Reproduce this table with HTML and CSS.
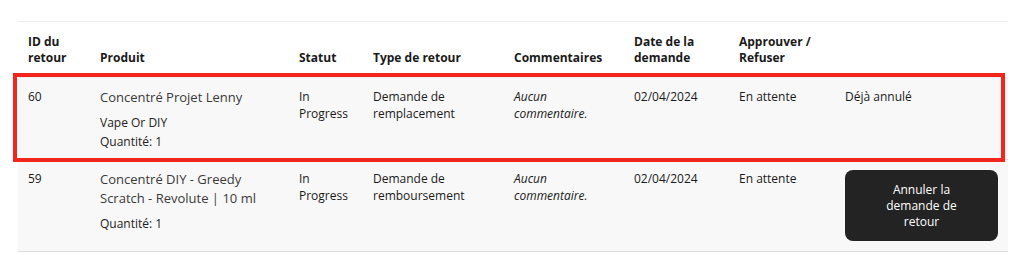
FILE: index.html
```html
<!DOCTYPE html>
<html lang="fr">
<head>
<meta charset="utf-8">
<link rel="stylesheet" href="styles.css">
</head>
<body>
<div class="wrap">
  <table class="returns">
    <colgroup>
      <col class="c-id"><col class="c-prod"><col class="c-stat"><col class="c-type"><col class="c-com"><col class="c-date"><col class="c-appr"><col class="c-act">
    </colgroup>
    <thead>
      <tr>
        <th>ID du retour</th>
        <th>Produit</th>
        <th>Statut</th>
        <th>Type de retour</th>
        <th>Commentaires</th>
        <th>Date de la demande</th>
        <th>Approuver / Refuser</th>
        <th></th>
      </tr>
    </thead>
    <tbody>
      <tr class="first">
        <td>60</td>
        <td class="prod">
          <div class="pname">Concentré Projet Lenny</div>
          <div class="pmeta">Vape Or DIY<br>Quantité: 1</div>
        </td>
        <td>In Progress</td>
        <td>Demande de remplacement</td>
        <td><em>Aucun commentaire.</em></td>
        <td>02/04/2024</td>
        <td>En attente</td>
        <td>Déjà annulé</td>
      </tr>
      <tr>
        <td>59</td>
        <td class="prod">
          <div class="pname">Concentré DIY - Greedy Scratch - Revolute | 10 ml</div>
          <div class="pmeta">Quantité: 1</div>
        </td>
        <td>In Progress</td>
        <td>Demande de remboursement</td>
        <td><em>Aucun commentaire.</em></td>
        <td>02/04/2024</td>
        <td>En attente</td>
        <td><button class="cancel" type="button">Annuler la demande de retour</button></td>
      </tr>
    </tbody>
  </table>
  <div class="highlight"></div>
</div>
</body>
</html>
```

FILE: styles.css
```css
html, body {
  margin: 0;
  padding: 0;
  background: #fff;
}
body {
  font-family: "Open Sans", "Liberation Sans", sans-serif;
  color: #1a1a1a;
  font-size: 12px;
}
.wrap {
  position: relative;
  padding: 21px 25px 0 18px;
}
.returns {
  width: 990px;
  border-collapse: collapse;
  table-layout: fixed;
  border-top: 1px solid #ececec;
}
.c-id { width: 72px; }
.c-prod { width: 199px; }
.c-stat { width: 74px; }
.c-type { width: 141px; }
.c-com { width: 120px; }
.c-date { width: 105px; }
.c-appr { width: 106px; }
.c-act { width: 173px; }

.returns th {
  text-align: left;
  vertical-align: bottom;
  font-weight: 700;
  font-size: 12px;
  line-height: 16px;
  padding: 12px 10px 11px;
  color: #1a1a1a;
  border-bottom: 1px solid #ececec;
}
.returns td {
  vertical-align: top;
  padding: 10px 10px;
  line-height: 17px;
  background: #f8f8f8;
  border-bottom: 1px solid #dedede;
}
.returns .first td {
  padding-bottom: 8px;
}
.returns em {
  font-style: italic;
}
.prod {
  color: #3a3a3a;
}
.pname {
  font-size: 13px;
  line-height: 19px;
}
.pmeta {
  margin-top: 6px;
  line-height: 19px;
  color: #222;
}
.cancel {
  display: block;
  width: 100%;
  height: 71px;
  border: 0;
  border-radius: 8px;
  background: #232323;
  color: #fff;
  font-family: inherit;
  font-size: 12px;
  line-height: 16px;
  padding: 0 28px;
  text-align: center;
}
.highlight {
  position: absolute;
  left: 13px;
  top: 73px;
  width: 992px;
  height: 89px;
  box-sizing: border-box;
  border: 4px solid #f2261c;
  pointer-events: none;
}
```
